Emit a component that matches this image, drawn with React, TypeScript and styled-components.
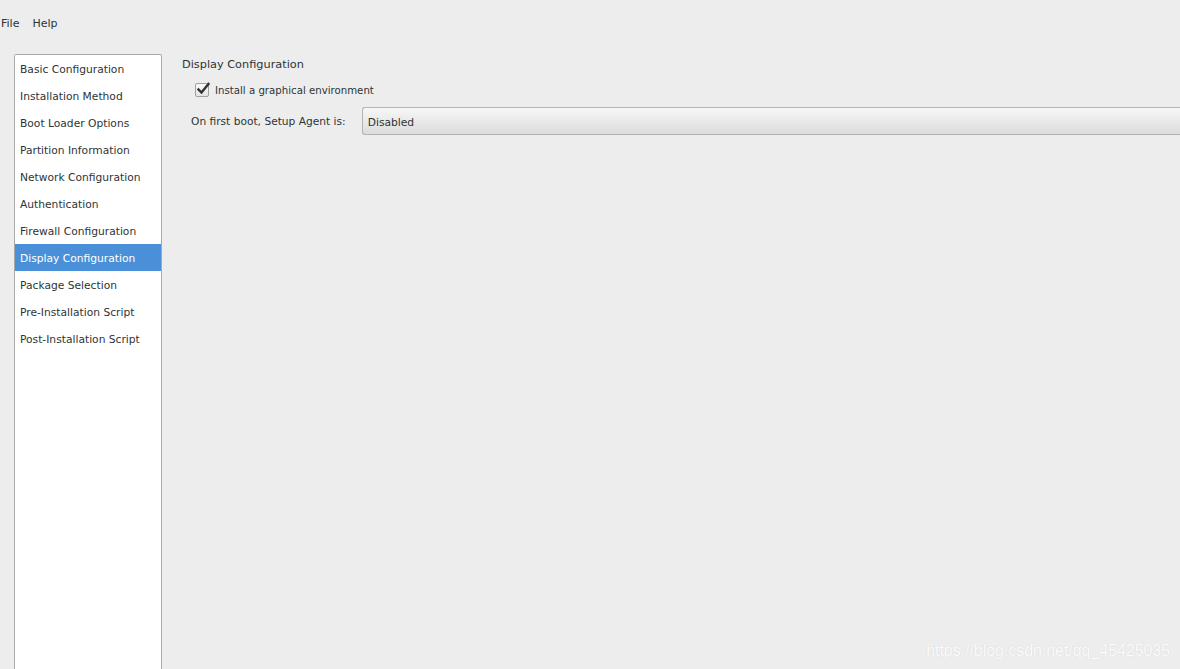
import React from "react";
import styled, { createGlobalStyle } from "styled-components";

const Global = createGlobalStyle`
  html, body { margin: 0; padding: 0; background: #ededed; }
  body { font-family: "DejaVu Sans", "Noto Sans", sans-serif; font-size: 11px; color: #2e3436; }
  #root { width: 1180px; height: 669px; overflow: hidden; }
`;

const Page = styled.div`
  width: 1180px;
  height: 669px;
  display: flex;
  flex-direction: column;
  background: #ededed;
  position: relative;
  overflow: hidden;
`;

const MenuBar = styled.div`
  height: 46px;
  display: flex;
  align-items: center;
  padding: 1px 0 0 1px;
  gap: 13px;
  box-sizing: border-box;
`;

const MenuItem = styled.span`
  font-size: 11px;
  color: #2e3436;
`;

const Body = styled.div`
  flex: 1;
  display: flex;
  padding: 8px 0 0 14px;
  min-height: 0;
`;

const Sidebar = styled.div`
  width: 146px;
  background: #ffffff;
  border: 1px solid #a9a9a9;
  border-bottom: none;
  border-radius: 2px 2px 0 0;
  display: flex;
  flex-direction: column;
  flex-shrink: 0;
`;

const NavItem = styled.div<{ $active?: boolean }>`
  height: 27px;
  display: flex;
  align-items: center;
  padding-left: 5px;
  padding-top: 1px;
  box-sizing: border-box;
  font-size: 10.7px;
  color: ${(p) => (p.$active ? "#ffffff" : "#2e3436")};
  background: ${(p) => (p.$active ? "#4a90d9" : "transparent")};
`;

const Content = styled.div`
  flex: 1;
  display: flex;
  flex-direction: column;
  padding: 4px 0 0 20px;
  min-width: 0;
`;

const Title = styled.div`
  font-size: 11.3px;
  color: #2e3436;
  height: 14px;
  line-height: 14px;
`;

const CheckRow = styled.label`
  display: flex;
  align-items: center;
  margin-top: 11px;
  margin-left: 13px;
  gap: 6px;
  height: 14px;
`;

const Box = styled.span`
  width: 12px;
  height: 12px;
  border: 1px solid #a1a1a1;
  border-radius: 2px;
  background: linear-gradient(#fafafa, #e4e4e4);
  display: flex;
  align-items: center;
  justify-content: center;
  position: relative;
`;

const Mark = styled.svg`
  position: absolute;
  left: 1px;
  top: -2px;
`;

const Label = styled.span<{ $size?: number }>`
  font-size: ${(p) => p.$size ?? 11}px;
  color: #2e3436;
  white-space: nowrap;
`;

const FieldRow = styled.div`
  display: flex;
  align-items: center;
  margin-top: 10px;
  margin-left: 9px;
  gap: 16px;
`;

const Combo = styled.div`
  flex: 1;
  height: 28px;
  box-sizing: border-box;
  border: 1px solid #b3b3b3;
  border-right: none;
  border-radius: 3px 0 0 3px;
  background: linear-gradient(#f7f7f7, #dcdcdc);
  display: flex;
  align-items: center;
  padding-left: 5px;
  padding-top: 2px;
  font-size: 10.7px;
  color: #2e3436;
  margin-right: -4px;
`;

const Watermark = styled.div`
  position: absolute;
  right: 10px;
  bottom: 9px;
  font-family: "Liberation Sans", Arial, sans-serif;
  font-size: 15.9px;
  color: #fbfbfb;
  text-shadow: 0 0 1px #cfcfcf;
`;

const items = [
  "Basic Configuration",
  "Installation Method",
  "Boot Loader Options",
  "Partition Information",
  "Network Configuration",
  "Authentication",
  "Firewall Configuration",
  "Display Configuration",
  "Package Selection",
  "Pre-Installation Script",
  "Post-Installation Script",
];

export default function App() {
  return (
    <Page>
      <Global />
      <MenuBar>
        <MenuItem>File</MenuItem>
        <MenuItem>Help</MenuItem>
      </MenuBar>
      <Body>
        <Sidebar>
          {items.map((it) => (
            <NavItem key={it} $active={it === "Display Configuration"}>
              {it}
            </NavItem>
          ))}
        </Sidebar>
        <Content>
          <Title>Display Configuration</Title>
          <CheckRow>
            <Box>
              <Mark width="13" height="13" viewBox="0 0 13 13">
                <path d="M1.5 7.5 L4.5 10.5 L11.5 2" fill="none" stroke="#2e3436" strokeWidth="2.4" strokeLinecap="square" />
              </Mark>
            </Box>
            <Label $size={10.2}>Install a graphical environment</Label>
          </CheckRow>
          <FieldRow>
            <Label $size={10.65}>On first boot, Setup Agent is:</Label>
            <Combo>Disabled</Combo>
          </FieldRow>
        </Content>
      </Body>
      <Watermark>https://blog.csdn.net/qq_45425035</Watermark>
    </Page>
  );
}
